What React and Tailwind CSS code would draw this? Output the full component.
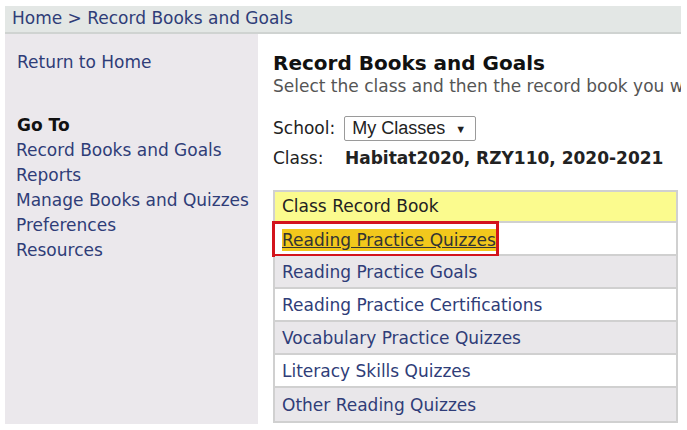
export default function App() {
  const rows = [
    { label: "Reading Practice Quizzes", highlight: true },
    { label: "Reading Practice Goals" },
    { label: "Reading Practice Certifications" },
    { label: "Vocabulary Practice Quizzes" },
    { label: "Literacy Skills Quizzes" },
    { label: "Other Reading Quizzes" },
  ];

  return (
    <div className="w-[687px] h-[430px] bg-white pt-[6px] pl-[5px] pr-[6px] overflow-hidden font-['DejaVu_Sans',Verdana,sans-serif]">
      <div className="flex h-[418px] flex-col">
        {/* breadcrumb */}
        <div className="h-[28px] shrink-0 bg-[#e3e7e5] border-b-2 border-[#cfd3d1] pl-[7px] flex items-center text-[17px] text-[#2f3d78]">
          Home &gt; Record Books and Goals
        </div>

        <div className="flex flex-1 min-h-0">
          {/* sidebar */}
          <div className="w-[253px] shrink-0 bg-[#ebe8ec] pl-[12px] pt-[16px] text-[17px] leading-[25px] text-[#2f3d78]">
            <a className="block">Return to Home</a>
            <div className="mt-[38px] font-bold text-[#111]">Go To</div>
            <a className="block -ml-[1px]">Record Books and Goals</a>
            <a className="block -ml-[1px]">Reports</a>
            <a className="block -ml-[1px]">Manage Books and Quizzes</a>
            <a className="block -ml-[1px]">Preferences</a>
            <a className="block -ml-[1px]">Resources</a>
          </div>

          {/* content */}
          <div className="flex-1 min-w-0 overflow-hidden bg-white pl-[15px] pt-[17px]">
            <h1 className="text-[20px] font-bold leading-[24px] text-[#111] whitespace-nowrap">
              Record Books and Goals
            </h1>
            <p className="mt-[1px] text-[17px] leading-[20px] text-[#555] whitespace-nowrap">
              Select the class and then the record book you would like to view.
            </p>

            <div className="mt-[20px] flex items-center text-[17px] text-[#222]">
              <span>School:</span>
              <div className="ml-[9px] w-[132px] h-[25px] border border-[#9a9a9a] rounded-[2px] pl-[7px] flex items-center gap-[10px] font-['Liberation_Sans',Arial,sans-serif] text-[18px] text-[#222]">
                My Classes
                <span className="text-[11px]">▼</span>
              </div>
            </div>
            <div className="mt-[6px] flex text-[17px] leading-[20px] text-[#222] whitespace-nowrap">
              <span className="w-[72px] shrink-0">Class:</span>
              <span className="font-bold">Habitat2020, RZY110, 2020-2021</span>
            </div>

            <div className="mt-[22px] w-[405px] border-2 border-[#d0d0d0] text-[17px]">
              <div className="h-[31px] bg-[#fbfb8e] flex items-center pl-[7px] pt-[2px] text-[#222] border-b-2 border-[#d0d0d0]">
                Class Record Book
              </div>
              {rows.map((r, i) => (
                <div
                  key={r.label}
                  className={
                    "relative h-[33px] flex items-center pl-[7px] pt-[3px] text-[#2f3d78] whitespace-nowrap " +
                    (i < rows.length - 1 ? "border-b-2 border-[#d0d0d0] " : "") +
                    (i % 2 === 0 ? "bg-white" : "bg-[#e9e7ea]")
                  }
                >
                  {r.highlight ? (
                    <>
                      <span className="bg-[#f2c81c] underline text-[#333] leading-[22px]">
                        {r.label}
                      </span>
                      <div className="absolute -left-[3px] -top-[2px] w-[227px] h-[36px] border-[3px] border-[#d3141c]"></div>
                    </>
                  ) : (
                    r.label
                  )}
                </div>
              ))}
            </div>
          </div>
        </div>
      </div>
    </div>
  );
}
